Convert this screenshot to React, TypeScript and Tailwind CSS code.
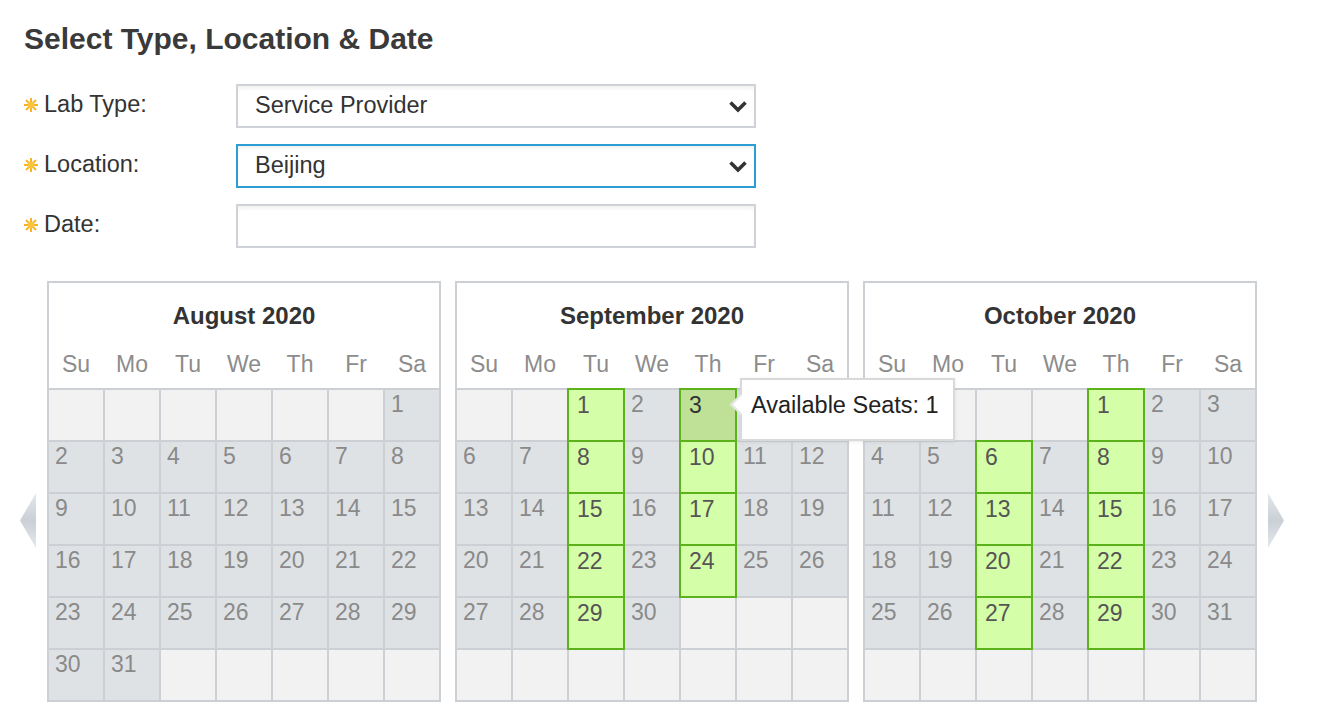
import React from 'react'

type Month = { name: string; start: number; days: number; open: number[]; hover?: number }

const DAY_NAMES = ['Su', 'Mo', 'Tu', 'We', 'Th', 'Fr', 'Sa']

const MONTHS: Month[] = [
  { name: 'August 2020', start: 6, days: 31, open: [] },
  { name: 'September 2020', start: 2, days: 30, open: [1, 3, 8, 10, 15, 17, 22, 24, 29], hover: 3 },
  { name: 'October 2020', start: 4, days: 31, open: [1, 6, 8, 13, 15, 20, 22, 27, 29] },
]

function Asterisk() {
  return (
    <svg width="14" height="14" viewBox="0 0 14 14" className="shrink-0">
      <g stroke="#f7b21e" strokeWidth="2" strokeLinecap="round">
        <path d="M7 0.8V13.2M0.8 7H13.2M2.6 2.6L11.4 11.4M11.4 2.6L2.6 11.4" />
      </g>
      <circle cx="7" cy="7" r="3.4" fill="#fac43f" />
    </svg>
  )
}

function Chevron() {
  return (
    <svg width="20" height="13" viewBox="0 0 20 13">
      <path d="M2.5 2.5L10 10L17.5 2.5" fill="none" stroke="#333" strokeWidth="3.6" />
    </svg>
  )
}

function Arrow({ dir }: { dir: 'left' | 'right' }) {
  const id = `grad-${dir}`
  return (
    <svg width="16" height="55" viewBox="0 0 16 55" className="mt-[212px] shrink-0">
      <defs>
        <linearGradient id={id} x1="0" y1="0" x2="0" y2="1">
          <stop offset="0" stopColor="#e4e8eb" />
          <stop offset="0.5" stopColor="#c9d0d6" />
          <stop offset="1" stopColor="#e4e8eb" />
        </linearGradient>
      </defs>
      <polygon points={dir === 'left' ? '16,0 0,27.5 16,55' : '0,0 16,27.5 0,55'} fill={`url(#${id})`} />
    </svg>
  )
}

function Cell({ day, open, hover }: { day: number | null; open: boolean; hover: boolean }) {
  if (!day) return <div className="h-[50px] bg-[#f2f2f2]" />
  if (hover)
    return (
      <div className="h-[50px] bg-[#bfe197] pl-[8px] pt-[4px] leading-[23px] text-[#333] shadow-[0_0_0_2px_#5cb21b]">
        {day}
      </div>
    )
  if (open)
    return (
      <div className="h-[50px] bg-[#d5fea8] pl-[8px] pt-[4px] leading-[23px] text-[#555] shadow-[0_0_0_2px_#5cb21b]">
        {day}
      </div>
    )
  return <div className="h-[50px] bg-[#dfe2e5] pl-[6px] pt-[3px] leading-[23px] text-[#8a8a8a]">{day}</div>
}

function Calendar({ month, children }: { month: Month; children?: React.ReactNode }) {
  const cells: (number | null)[] = []
  for (let i = 0; i < 42; i++) {
    const d = i - month.start + 1
    cells.push(d >= 1 && d <= month.days ? d : null)
  }
  return (
    <div className="relative w-[394px] border-2 border-[#ccd0d4] bg-white">
      <div className="pb-[10px] pt-[19px]">
        <div className="text-center text-[24px] font-bold leading-[28px] text-[#333]">{month.name}</div>
        <div className="mt-[20px] grid grid-cols-7 gap-[2px] text-center text-[23px] leading-[28px] text-[#8c8c8c]">
          {DAY_NAMES.map((d) => (
            <div key={d}>{d}</div>
          ))}
        </div>
      </div>
      <div className="grid grid-cols-7 gap-[2px] border-t-2 border-[#ccd0d4] bg-[#ccd0d4] text-[23px]">
        {cells.map((d, i) => (
          <Cell key={i} day={d} open={d !== null && month.open.includes(d)} hover={d !== null && d === month.hover} />
        ))}
      </div>
      {children}
    </div>
  )
}

function FormRow({ label, children }: { label: string; children: React.ReactNode }) {
  return (
    <div className="flex items-center">
      <div className="flex w-[212px] items-center gap-[6px] pb-[3px] text-[23.5px] text-[#333]">
        <Asterisk />
        <span>{label}</span>
      </div>
      {children}
    </div>
  )
}

export default function App() {
  return (
    <div className="min-h-screen bg-white font-['Liberation_Sans',Arial,sans-serif]">
      <div className="pl-6 pt-[23px]">
        <h1 className="text-[30px] font-bold leading-[32px] text-[#3a3a3a]">Select Type, Location &amp; Date</h1>

        <div className="mt-[29px] flex flex-col gap-[16px]">
          <FormRow label="Lab Type:">
            <div className="flex h-[44px] w-[520px] items-center justify-between border-2 border-[#cfd3d7] bg-white pl-[17px] pr-[6px] text-[23.5px] text-[#333] shadow-[inset_0_5px_5px_-3px_rgba(0,0,0,0.07)]">
              <span>Service Provider</span>
              <Chevron />
            </div>
          </FormRow>
          <FormRow label="Location:">
            <div className="flex h-[44px] w-[520px] items-center justify-between border-2 border-[#2b9fd5] bg-white pl-[17px] pr-[6px] text-[23.5px] text-[#333] shadow-[inset_0_5px_5px_-3px_rgba(0,0,0,0.07)]">
              <span>Beijing</span>
              <Chevron />
            </div>
          </FormRow>
          <FormRow label="Date:">
            <div className="h-[44px] w-[520px] border-2 border-[#cfd3d7] bg-white shadow-[inset_0_5px_5px_-3px_rgba(0,0,0,0.07)]" />
          </FormRow>
        </div>
      </div>

      <div className="mt-[33px] flex items-start gap-[11px] pl-[20px]">
        <Arrow dir="left" />
        <div className="flex gap-[14px]">
          <Calendar month={MONTHS[0]} />
          <Calendar month={MONTHS[1]}>
            <div className="absolute left-[283px] top-[95px] z-10 h-[63px] w-[215px] border-2 border-[#d9d9d9] bg-white pl-[9px] pt-[11px] text-[23.5px] leading-[28px] text-[#222] shadow-[0_1px_4px_rgba(0,0,0,0.08)]">
              <div className="absolute left-[-9px] top-[17px] h-[15px] w-[15px] rotate-45 border-b-2 border-l-2 border-[#e2e2e2] bg-white" />
              <span className="relative">Available Seats: 1</span>
            </div>
          </Calendar>
          <Calendar month={MONTHS[2]} />
        </div>
        <Arrow dir="right" />
      </div>
    </div>
  )
}
